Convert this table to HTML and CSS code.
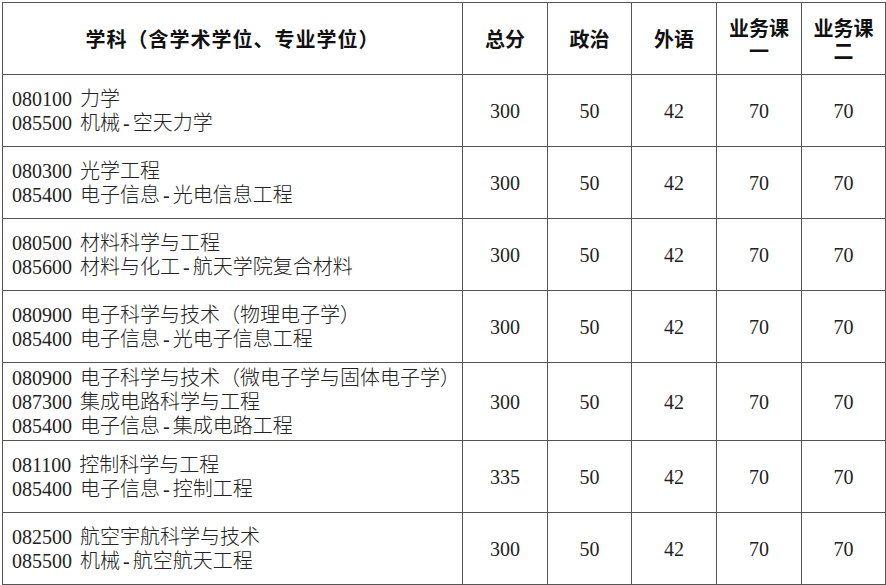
FILE: index.html
```html
<!DOCTYPE html>
<html lang="zh-CN">
<head>
<meta charset="utf-8">
<title>分数线</title>
<link rel="stylesheet" href="styles.css">
</head>
<body>
<table class="grid">
  <colgroup>
    <col class="c-name"><col class="c-num"><col class="c-num2"><col class="c-num"><col class="c-num"><col class="c-num2">
  </colgroup>
  <thead>
    <tr class="head">
      <th class="wide">学科（含学术学位、专业学位）</th>
      <th>总分</th>
      <th>政治</th>
      <th>外语</th>
      <th>业务课<br>一</th>
      <th>业务课<br>二</th>
    </tr>
  </thead>
  <tbody>
    <tr class="row">
      <td class="name"><span class="code">080100</span> 力学<br><span class="code">085500</span> 机械<span class="dash">-</span>空天力学</td>
      <td>300</td><td>50</td><td>42</td><td>70</td><td>70</td>
    </tr>
    <tr class="row">
      <td class="name"><span class="code">080300</span> 光学工程<br><span class="code">085400</span> 电子信息<span class="dash">-</span>光电信息工程</td>
      <td>300</td><td>50</td><td>42</td><td>70</td><td>70</td>
    </tr>
    <tr class="row">
      <td class="name"><span class="code">080500</span> 材料科学与工程<br><span class="code">085600</span> 材料与化工<span class="dash">-</span>航天学院复合材料</td>
      <td>300</td><td>50</td><td>42</td><td>70</td><td>70</td>
    </tr>
    <tr class="row">
      <td class="name"><span class="code">080900</span> 电子科学与技术（物理电子学）<br><span class="code">085400</span> 电子信息<span class="dash">-</span>光电子信息工程</td>
      <td>300</td><td>50</td><td>42</td><td>70</td><td>70</td>
    </tr>
    <tr class="row tall">
      <td class="name"><span class="code">080900</span> 电子科学与技术（微电子学与固体电子学）<br><span class="code">087300</span> 集成电路科学与工程<br><span class="code">085400</span> 电子信息<span class="dash">-</span>集成电路工程</td>
      <td>300</td><td>50</td><td>42</td><td>70</td><td>70</td>
    </tr>
    <tr class="row">
      <td class="name"><span class="code">081100</span> 控制科学与工程<br><span class="code">085400</span> 电子信息<span class="dash">-</span>控制工程</td>
      <td>335</td><td>50</td><td>42</td><td>70</td><td>70</td>
    </tr>
    <tr class="row">
      <td class="name"><span class="code">082500</span> 航空宇航科学与技术<br><span class="code">085500</span> 机械<span class="dash">-</span>航空航天工程</td>
      <td>300</td><td>50</td><td>42</td><td>70</td><td>70</td>
    </tr>
  </tbody>
</table>
</body>
</html>
```
FILE: styles.css
```css
html, body {
  margin: 0;
  padding: 0;
  background: #fff;
}
body {
  padding: 2px 0 0 2px;
  font-family: "Liberation Serif", "Noto Sans CJK SC", serif;
  color: #222;
}
.grid {
  border-collapse: collapse;
  table-layout: fixed;
  width: 884px;
}
.c-name { width: 460px; }
.c-num { width: 85px; }
.c-num2 { width: 84px; }
.grid th, .grid td {
  border: 1px solid #555;
  padding: 0;
  text-align: center;
  vertical-align: middle;
}
.head th {
  height: 71px;
  font-family: "Noto Sans CJK SC", sans-serif;
  font-weight: 700;
  font-size: 20px;
  line-height: 23px;
  color: #111;
}
.head th.wide {
  letter-spacing: 1px;
}
.row td {
  height: 71px;
  font-size: 20px;
  font-weight: 300;
  line-height: 24px;
}
.row.tall td {
  height: 77px;
}
.row td.name {
  text-align: left;
  padding-left: 9px;
}
.code {
  margin-right: 3px;
}
.dash {
  padding: 0 3px;
}
```
